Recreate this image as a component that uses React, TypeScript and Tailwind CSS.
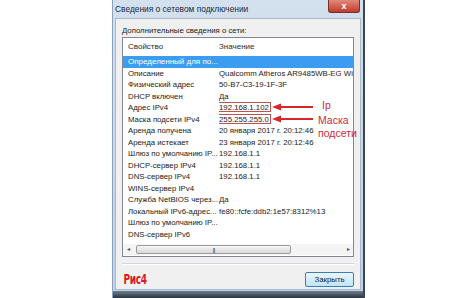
const rows: { name: string; value: string; boxed?: boolean }[] = [
  { name: "Описание", value: "Qualcomm Atheros AR9485WB-EG Wireless Network Adapter" },
  { name: "Физический адрес", value: "50-B7-C3-19-1F-3F" },
  { name: "DHCP включен", value: "Да" },
  { name: "Адрес IPv4", value: "192.168.1.102", boxed: true },
  { name: "Маска подсети IPv4", value: "255.255.255.0", boxed: true },
  { name: "Аренда получена", value: "20 января 2017 г. 20:12:46" },
  { name: "Аренда истекает", value: "23 января 2017 г. 20:12:46" },
  { name: "Шлюз по умолчанию IP...", value: "192.168.1.1" },
  { name: "DHCP-сервер IPv4", value: "192.168.1.1" },
  { name: "DNS-сервер IPv4", value: "192.168.1.1" },
  { name: "WINS-сервер IPv4", value: "" },
  { name: "Служба NetBIOS через...", value: "Да" },
  { name: "Локальный IPv6-адрес...", value: "fe80::fcfe:ddb2:1e57:8312%13" },
  { name: "Шлюз по умолчанию IP...", value: "" },
  { name: "DNS-сервер IPv6", value: "" },
];

const Arrow = ({ top }: { top: number }) => (
  <svg
    className="absolute left-[272px] w-[42px] h-[8px]"
    style={{ top: top - 4 }}
    viewBox="0 0 42 8"
  >
    <path d="M8 4 H41" stroke="#d8262b" strokeWidth="2" />
    <path d="M0 4 L9 0.5 L9 7.5 Z" fill="#d8262b" />
  </svg>
);

export default function App() {
  return (
    <div className="relative w-[474px] h-[298px] bg-white overflow-hidden font-['Liberation_Sans',sans-serif] text-[#1a1a1a]">
      <div className="ml-[112px] w-[251px] h-[298px] flex flex-col bg-gradient-to-b from-[#d3e0ee] to-[#bfd2e8] border-l border-[#8aa2bd] shadow-[2px_0_0_#3c4650]">
        {/* title bar */}
        <div className="h-[18px] flex items-start justify-between">
          <span className="pl-[2px] pt-[3px] text-[8.4px] leading-[12px] text-[#1c2c40]">
            Сведения о сетевом подключении
          </span>
          <div className="mr-[3px] w-[32px] h-[13px] rounded-b-[3px] border border-t-0 border-[#7a3030] bg-gradient-to-b from-[#e08a7a] to-[#c0392b] flex items-center justify-center text-white text-[9px] font-bold leading-none">
            x
          </div>
        </div>

        {/* client area */}
        <div className="mx-[2px] h-[272px] bg-[#f0f0f0] border border-[#a9b9cc] px-[6px] flex flex-col">
          <div className="pt-[6px] h-[18px] text-[7.8px] leading-[12px]">Дополнительные сведения о сети:</div>
          <div className="h-[220px] bg-white border border-[#828790] flex flex-col">
            <div className="h-[18px] grid grid-cols-[91px_1fr] pl-[5px] items-center text-[8px] text-[#2a2a2a]">
              <span>Свойство</span>
              <span>Значение</span>
            </div>
            <div className="h-[11.5px] bg-[#3c9cf0] text-white text-[8px] leading-[11.5px] pl-[5px] whitespace-nowrap">
              Определенный для по...
            </div>
            {rows.map((r, i) => (
              <div
                key={i}
                className="h-[11.5px] grid grid-cols-[91px_1fr] pl-[5px] text-[7.8px] leading-[11.5px] whitespace-nowrap overflow-hidden"
              >
                <span className="overflow-hidden">{r.name}</span>
                <span className="overflow-hidden">
                  {r.boxed ? (
                    <span className="inline-block -ml-[3px] w-[55px] h-[10px] leading-[9px] pl-[2px] border border-[#c0504d]">
                      {r.value}
                    </span>
                  ) : (
                    r.value
                  )}
                </span>
              </div>
            ))}
            <div className="flex-1" />
            {/* horizontal scrollbar */}
            <div className="h-[11px] mb-[1px] flex items-center bg-[#f4f4f4] text-[#505050]">
              <span className="w-[10px] text-center text-[6px]">◂</span>
              <div className="ml-[3px] w-[155px] h-[9px] rounded-[2px] border border-[#9c9c9c] bg-gradient-to-b from-[#f6f6f6] to-[#d8d8d8] flex items-center justify-center text-[6px] leading-none tracking-[-1px]">
                |||
              </div>
              <div className="flex-1" />
              <span className="w-[10px] text-center text-[6px]">▸</span>
            </div>
          </div>
          <div className="mt-[6px] h-[2px] border-t border-[#d5d5d5] border-b border-b-white" />
          <div className="mt-[6px] flex items-center justify-between">
            <span className="inline-block origin-left scale-x-[0.72] pl-[2px] font-['DejaVu_Sans_Condensed',sans-serif] font-bold text-[#d81c24] text-[14px] leading-[16px] tracking-[-0.5px]">
              Рис4
            </span>
            <button className="mt-[1px] w-[49px] h-[15px] rounded-[2px] border border-[#3c7fb1] bg-gradient-to-b from-[#eaf6fd] to-[#bee6fd] text-[7.8px] leading-[13px] text-[#1a1a1a]">
              Закрыть
            </button>
          </div>
        </div>
        <div className="flex-1 mt-[1px] bg-gradient-to-b from-[#6e7e90] to-[#2c3540]" />
      </div>

      {/* annotations */}
      <Arrow top={107} />
      <Arrow top={119} />
      <span className="absolute left-[322px] top-[99px] text-[10.5px] leading-[13px] text-[#d2283a]">Ip</span>
      <span className="absolute left-[318px] top-[114px] text-[10.5px] leading-[13px] text-[#d2283a]">Маска</span>
      <span className="absolute left-[318px] top-[127px] text-[10.5px] leading-[13px] text-[#d2283a]">подсети</span>
    </div>
  );
}
